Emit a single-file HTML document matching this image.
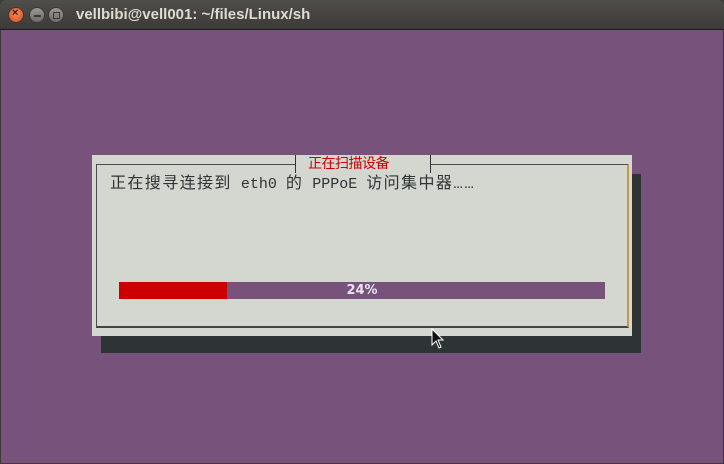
<!DOCTYPE html>
<html><head><meta charset="utf-8"><style>
*{margin:0;padding:0;box-sizing:border-box}
body{width:724px;height:464px;background:#3c3b37;position:relative;overflow:hidden;font-family:"Liberation Mono","Noto Sans CJK SC",monospace}
.tb{position:absolute;left:0;top:0;width:724px;height:30px;background:linear-gradient(#4f4e4a,#3c3b37);border-radius:6px 6px 0 0;border-bottom:1px solid #1f1a1f}
.title{position:absolute;left:76px;top:6px;font:bold 15px "Liberation Sans","DejaVu Sans",sans-serif;color:#dfdbd2}
.btn{position:absolute;top:7px;width:16px;height:16px;border-radius:50%;background:linear-gradient(#9a9892,#6e6c67);border:1px solid #3a3935}
.term{position:absolute;left:1px;top:30px;width:722px;height:433px;background:#77527a}
.shadow{position:absolute;left:101px;top:174px;width:540px;height:179px;background:#2e3436}
.dlg{position:absolute;left:92px;top:155px;width:540px;height:181px;background:#d3d7cf}
.frame{position:absolute;left:96px;top:164px;width:533px;height:164px;border:1px solid #4a4a52;border-right:2px solid #c49b45;border-bottom:2px solid #444}
.ttl{position:absolute;left:295px;top:155px;height:18px;background:#d3d7cf;border-left:1px solid #333;border-right:1px solid #333;width:136px}
.ttl span{position:absolute;left:12px;top:-1px;font-family:"Noto Sans CJK SC",sans-serif;font-size:14px;line-height:18px;color:#cc0000;white-space:pre;letter-spacing:-0.5px}
.msg{position:absolute;left:110px;top:174px;font-size:15px;color:#2e3436;white-space:pre;line-height:20px}
.c{font-size:16px;letter-spacing:1.4px}
.bar{position:absolute;left:119px;top:282px;width:486px;height:17px;background:#77527a}
.fill{position:absolute;left:0;top:0;width:108px;height:17px;background:#cc0000}
.pct{position:absolute;left:0;width:100%;top:0;text-align:center;font:bold 13px "DejaVu Sans","Liberation Sans",sans-serif;color:#e8e4ee;line-height:17px}
</style></head><body>
<div class="tb">
<div class="btn" style="left:8px;background:radial-gradient(circle at 50% 40%,#f58a5c,#d6491e);"><span style="position:absolute;left:3px;top:-1px;font:bold 11px sans-serif;color:#3a1a10">×</span></div>
<div class="btn" style="left:29px"><span style="position:absolute;left:4px;top:7px;width:7px;height:2px;background:#3a3935"></span></div>
<div class="btn" style="left:48px"><span style="position:absolute;left:4px;top:4px;width:7px;height:7px;border:1px solid #3a3935"></span></div>
<div class="title">vellbibi@vell001: ~/files/Linux/sh</div>
</div>
<div class="term"></div>
<div class="shadow"></div>
<div class="dlg"></div>
<div class="frame"></div>
<div class="ttl"><span>正在扫描设备</span></div>
<div class="msg"><span class="c">正在搜寻连接到</span> eth0 <span class="c">的</span> PPPoE <span class="c">访问集中器……</span></div>
<div class="bar"><div class="fill"></div><div class="pct">24%</div></div>
<svg style="position:absolute;left:431px;top:328px" width="14" height="22" viewBox="0 0 14 22"><path d="M1 1 L1 17 L5 13 L8 20 L10 19 L7 12 L12 12 Z" fill="#111" stroke="#fff" stroke-width="1"/></svg>
</body></html>
